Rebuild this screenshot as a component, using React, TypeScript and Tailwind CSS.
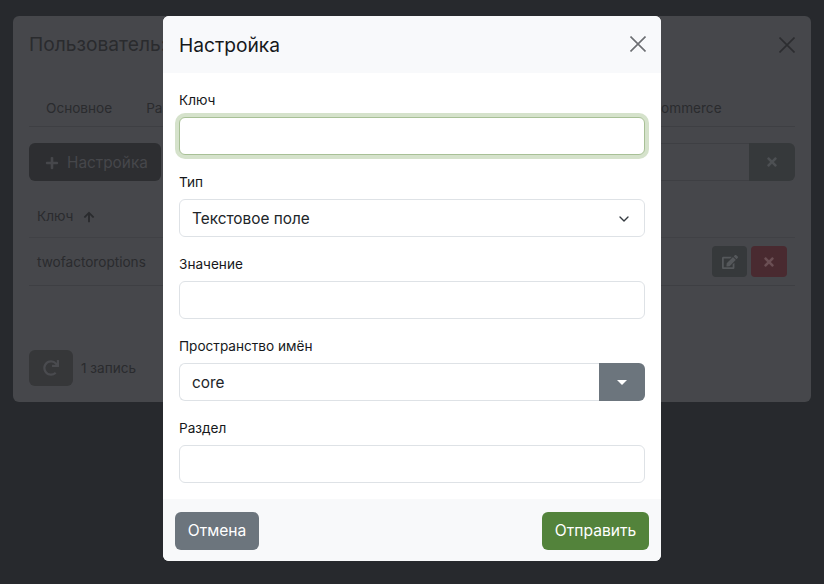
import { ChevronDown } from "lucide-react";
import { FaArrowUp, FaEdit, FaPlus, FaRedo, FaTimes } from "react-icons/fa";

function Field({ label, children }: { label: string; children: React.ReactNode }) {
  return (
    <div className="mb-[17px] last:mb-0">
      <label className="mb-[7px] block h-5 text-[13.6px] leading-5 text-[#16181b]">{label}</label>
      {children}
    </div>
  );
}

function CloseIcon({ className }: { className: string }) {
  return (
    <svg className={className} width="16" height="16" viewBox="0 0 16 16" fill="none" stroke="currentColor" strokeWidth="1.6">
      <path d="M0.5 0.5L15.5 15.5M15.5 0.5L0.5 15.5" />
    </svg>
  );
}

const inputClass =
  "block h-[38px] w-full rounded-md border border-[#dee2e6] bg-white px-3 text-[15.36px] text-[#212529] outline-none";

function Background() {
  return (
    <div className="absolute left-[13px] top-4 flex h-[386px] w-[798px] flex-col rounded-md bg-[#46474b] px-4 text-[#2a2b2e]">
      <div className="flex h-[57px] items-center justify-between">
        <span className="text-[19.2px]">Пользователь: admin</span>
        <CloseIcon className="text-[#2c2d30]" />
      </div>
      <div className="mt-[18px] flex h-[36px] items-center border-b border-[#3e3f43] pb-[1px] pl-[17px] text-[13.6px]">
        <span>Основное</span>
        <span className="ml-[34px]">Разрешения</span>
        <span className="ml-[423px]">Commerce</span>
      </div>
      <div className="mt-4 flex h-[38px] justify-between">
        <div className="flex w-[132px] items-center gap-2 rounded-md bg-[#2d2e31] pl-4 pt-px text-[15.36px] text-[#46474b]">
          <FaPlus className="h-3.5 w-3.5" />
          Настройка
        </div>
        <div className="flex">
          <div className="w-[300px] border-y border-[#3e3f43]" />
          <div className="flex w-[46px] items-center justify-center rounded-r-md bg-[#36393b]">
            <FaTimes className="h-3.5 w-3.5 text-[#4d5053]" />
          </div>
        </div>
      </div>
      <div className="mt-4 flex h-[41px] items-center gap-2.5 border-b border-[#404145] pb-[1px] pl-2 text-[13.6px]">
        Ключ
        <FaArrowUp className="h-3 w-3" />
      </div>
      <div className="flex h-12 items-center justify-between border-b border-[#3e3f43] pl-2 pr-2 text-[13.6px]">
        <span className="pt-px">twofactoroptions</span>
        <div className="flex gap-1">
          <div className="flex h-[31px] w-[35px] items-center justify-center rounded bg-[#36393b]">
            <FaEdit className="h-4 w-4 text-[#55585b]" />
          </div>
          <div className="flex h-[31px] w-9 items-center justify-center rounded bg-[#492a30]">
            <FaTimes className="h-3.5 w-3.5 text-[#6b4f54]" />
          </div>
        </div>
      </div>
      <div className="mt-auto mb-4 flex items-center gap-2 text-[13.6px]">
        <div className="flex h-9 w-11 items-center justify-center rounded-md bg-[#363739]">
          <FaRedo className="h-4 w-4 text-[#4a4b4f]" />
        </div>
        1 запись
      </div>
    </div>
  );
}

export default function App() {
  return (
    <div className="relative h-[584px] w-[824px] overflow-hidden bg-[#27292d] font-['Inter',sans-serif]">
      <Background />
      <div className="absolute left-[163px] top-4 flex h-[545px] w-[498px] flex-col overflow-hidden rounded-md bg-white">
        <div className="flex h-[57px] shrink-0 items-center justify-between bg-[#f8f9fb] pl-4 pr-[15px]">
          <h5 className="text-[19.2px] leading-6 text-[#16181b]">Настройка</h5>
          <CloseIcon className="-mt-px text-[#6c6e72]" />
        </div>
        <div className="flex-1 px-4 pt-[17px]">
          <Field label="Ключ">
            <input className="block h-[38px] w-full rounded-md border border-[#a8c096] bg-white px-3 text-[15.36px] shadow-[0_0_0_4px_#d5e2cb] outline-none" />
          </Field>
          <Field label="Тип">
            <div className={`${inputClass} flex items-center justify-between pt-px`}>
              Текстовое поле
              <ChevronDown className="h-4 w-4 text-[#343a40]" strokeWidth={2} />
            </div>
          </Field>
          <Field label="Значение">
            <input className={inputClass} />
          </Field>
          <Field label="Пространство имён">
            <div className="flex h-[38px]">
              <div className="flex flex-1 items-center rounded-l-md border border-r-0 border-[#dee2e6] bg-white px-3 pt-px text-[15.36px] text-[#212529]">
                core
              </div>
              <div className="flex w-[46px] items-center justify-center rounded-r-md bg-[#6c757d]">
                <span className="h-0 w-0 border-x-[5px] border-t-[5px] border-x-transparent border-t-white" />
              </div>
            </div>
          </Field>
          <Field label="Раздел">
            <input className={inputClass} />
          </Field>
        </div>
        <div className="flex h-[62px] shrink-0 items-end justify-between bg-[#f8f9fa] px-3 pb-[11px]">
          <button className="h-[38px] w-[84px] rounded-md bg-[#6c757d] text-[15.6px] text-white">Отмена</button>
          <button className="h-[38px] w-[107px] rounded-md bg-[#53833b] text-[15.6px] text-white">Отправить</button>
        </div>
      </div>
    </div>
  );
}
